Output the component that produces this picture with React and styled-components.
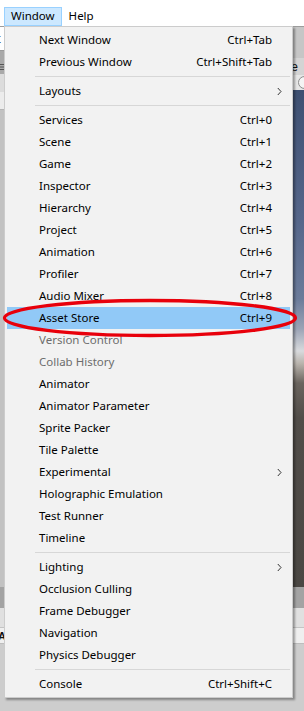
import React from "react";
import styled, { createGlobalStyle } from "styled-components";

const GlobalStyle = createGlobalStyle`
  html, body { margin: 0; padding: 0; background: #ffffff; }
  body { font-family: "Noto Sans", "Open Sans", sans-serif; }
  * { box-sizing: border-box; }
`;

const Page = styled.div`
  position: relative;
  width: 304px;
  height: 711px;
  overflow: hidden;
  display: flex;
  flex-direction: column;
  font-family: "Noto Sans", "Open Sans", sans-serif;
  font-size: 11.5px;
  color: #000;
`;

const MenuBar = styled.div`
  height: 26px;
  flex: none;
  background: #ffffff;
  display: flex;
  align-items: flex-start;
  padding: 7px 0 0 4px;
`;

const MenuBarItem = styled.div`
  height: 19px;
  display: flex;
  align-items: center;
  padding: 0 ${(p) => (p.$active ? "6px" : "6px")};
  border: 1px solid ${(p) => (p.$active ? "#99d1ff" : "transparent")};
  background: ${(p) => (p.$active ? "#cce8ff" : "transparent")};
  line-height: 1;
  padding-bottom: 1px;
`;

const Editor = styled.div`
  flex: 1;
  display: flex;
  flex-direction: column;
`;

const TopArea = styled.div`
  height: 561px;
  flex: none;
  display: flex;
`;

const LeftPane = styled.div`
  width: 150px;
  flex: none;
  display: flex;
  flex-direction: column;
  border-right: 1px solid #888;
`;

const RightPane = styled.div`
  flex: 1;
  display: flex;
  flex-direction: column;
`;

const Band = styled.div`
  height: ${(p) => p.$h}px;
  flex: ${(p) => (p.$grow ? 1 : "none")};
  background: ${(p) => p.$bg};
  border-bottom: ${(p) => (p.$line ? `1px solid ${p.$line}` : "none")};
  display: flex;
  align-items: center;
  justify-content: ${(p) => (p.$end ? "flex-end" : "flex-start")};
  overflow: hidden;
`;

const CutText = styled.span`
  font-family: "Liberation Sans", Arial, sans-serif;
  font-size: ${(p) => p.$size || 12}px;
  font-weight: ${(p) => (p.$bold ? 700 : 400)};
  color: #111;
  margin-left: ${(p) => p.$ml || 0}px;
  margin-right: ${(p) => p.$mr || 0}px;
  white-space: nowrap;
`;

const SearchField = styled.div`
  width: 40px;
  height: 13px;
  flex: none;
  margin-right: -34px;
  border: 1px solid #8c8c8c;
  border-radius: 7px;
  background: #f4f4f4;
`;

const SceneView = styled.div`
  flex: 1;
  background: linear-gradient(
    to bottom,
    #3e5072 0%,
    #55668a 26%,
    #6b7b9a 42%,
    #9aa3b5 48%,
    #d8dadd 52.5%,
    #b9b4ad 55%,
    #6a645e 59%,
    #514d49 66%,
    #4a4743 100%
  );
`;

const BottomArea = styled.div`
  flex: 1;
  display: flex;
  flex-direction: column;
`;

const DropMenu = styled.div`
  position: absolute;
  top: 26px;
  left: 4px;
  width: 289px;
  height: 672px;
  background: #f2f2f2;
  border: 1px solid #cccccc;
  padding: 2px;
  box-shadow: 2px 2px 2px rgba(0, 0, 0, 0.35);
  display: flex;
  flex-direction: column;
`;

const Row = styled.div`
  height: 22px;
  flex: none;
  display: grid;
  grid-template-columns: 1fr auto 18px;
  align-items: center;
  padding-left: 32px;
  background: ${(p) => (p.$active ? "#91c9f7" : "transparent")};
  color: ${(p) => (p.$disabled ? "#6d6d6d" : "#000000")};
  white-space: nowrap;
  line-height: 1;
  padding-bottom: 1px;
`;

const Label = styled.span``;

const Shortcut = styled.span`
  text-align: right;
`;

const ArrowCell = styled.span`
  display: flex;
  align-items: center;
  padding-left: 5px;
  padding-top: 1px;
`;

const Separator = styled.div`
  height: 7px;
  flex: none;
  display: flex;
  align-items: center;
  padding-left: 28px;
  &::after {
    content: "";
    display: block;
    flex: 1;
    height: 1px;
    background: #d7d7d7;
  }
`;

const Ring = styled.svg`
  position: absolute;
  left: 0;
  top: 295px;
  pointer-events: none;
`;

const Chevron = () => (
  <svg width="5" height="9" viewBox="0 0 5 9">
    <polyline points="0.8,1 4,4.5 0.8,8" fill="none" stroke="#333" strokeWidth="1" />
  </svg>
);

const HamburgerIcon = () => (
  <svg width="5" height="6" viewBox="0 0 5 6" style={{ marginLeft: -1, marginTop: 8 }}>
    <rect x="0" y="0" width="5" height="1" fill="#555" />
    <rect x="0" y="2.5" width="5" height="1" fill="#555" />
    <rect x="0" y="5" width="5" height="1" fill="#555" />
  </svg>
);

const items = [
  { label: "Next Window", sc: "Ctrl+Tab" },
  { label: "Previous Window", sc: "Ctrl+Shift+Tab" },
  "sep",
  { label: "Layouts", sub: true },
  "sep",
  { label: "Services", sc: "Ctrl+0" },
  { label: "Scene", sc: "Ctrl+1" },
  { label: "Game", sc: "Ctrl+2" },
  { label: "Inspector", sc: "Ctrl+3" },
  { label: "Hierarchy", sc: "Ctrl+4" },
  { label: "Project", sc: "Ctrl+5" },
  { label: "Animation", sc: "Ctrl+6" },
  { label: "Profiler", sc: "Ctrl+7" },
  { label: "Audio Mixer", sc: "Ctrl+8" },
  { label: "Asset Store", sc: "Ctrl+9", active: true },
  { label: "Version Control", disabled: true },
  { label: "Collab History", disabled: true },
  { label: "Animator" },
  { label: "Animator Parameter" },
  { label: "Sprite Packer" },
  { label: "Tile Palette" },
  { label: "Experimental", sub: true },
  { label: "Holographic Emulation" },
  { label: "Test Runner" },
  { label: "Timeline" },
  "sep",
  { label: "Lighting", sub: true },
  { label: "Occlusion Culling" },
  { label: "Frame Debugger" },
  { label: "Navigation" },
  { label: "Physics Debugger" },
  "sep",
  { label: "Console", sc: "Ctrl+Shift+C" },
];

export default function App() {
  return (
    <>
      <GlobalStyle />
      <Page>
        <MenuBar>
          <MenuBarItem $active>Window</MenuBarItem>
          <MenuBarItem>Help</MenuBarItem>
        </MenuBar>

        <Editor>
          <TopArea>
            <LeftPane>
              <Band $h={1} $bg="#9c9c9c" />
              <Band $h={24} $bg="#ffffff" $line="#9a9a9a">
                <CutText $ml={-3} $size={13}>t</CutText>
              </Band>
              <Band $h={23} $bg="#a9a9a9">
                <HamburgerIcon />
              </Band>
              <Band $h={18} $bg="#dcdcdc" />
              <Band $h={18} $bg="#ececec" $line="#b5b5b5" />
              <Band $grow $bg="#c2c2c2" />
            </LeftPane>
            <RightPane>
              <Band $h={1} $bg="#9c9c9c" />
              <Band $h={31} $bg="#c6c6c6" />
              <Band $h={17} $bg="#d4d4d4" $end>
                <CutText $mr={6}>e</CutText>
              </Band>
              <Band $h={15} $bg="#e6e6e6" $end>
                <SearchField />
              </Band>
              <SceneView />
            </RightPane>
          </TopArea>
          <BottomArea>
            <Band $h={21} $bg="#a3a3a3" />
            <Band $h={20} $bg="#e0e0e0" $line="#c4c4c4" />
            <Band $h={16} $bg="#efefef" $line="#bdbdbd">
              <CutText $ml={-2} $bold $size={11}>A</CutText>
            </Band>
            <Band $grow $bg="#cdcdcd" />
          </BottomArea>
        </Editor>

        <DropMenu>
          {items.map((it, i) =>
            it === "sep" ? (
              <Separator key={i} />
            ) : (
              <Row key={i} $active={it.active} $disabled={it.disabled}>
                <Label>{it.label}</Label>
                <Shortcut>{it.sc || ""}</Shortcut>
                <ArrowCell>{it.sub ? <Chevron /> : null}</ArrowCell>
              </Row>
            )
          )}
        </DropMenu>

        <Ring width="304" height="46" viewBox="0 0 304 46">
          <ellipse cx="150" cy="23" rx="145.5" ry="17.5" fill="none" stroke="#e8000b" strokeWidth="3.3" />
        </Ring>
      </Page>
    </>
  );
}
